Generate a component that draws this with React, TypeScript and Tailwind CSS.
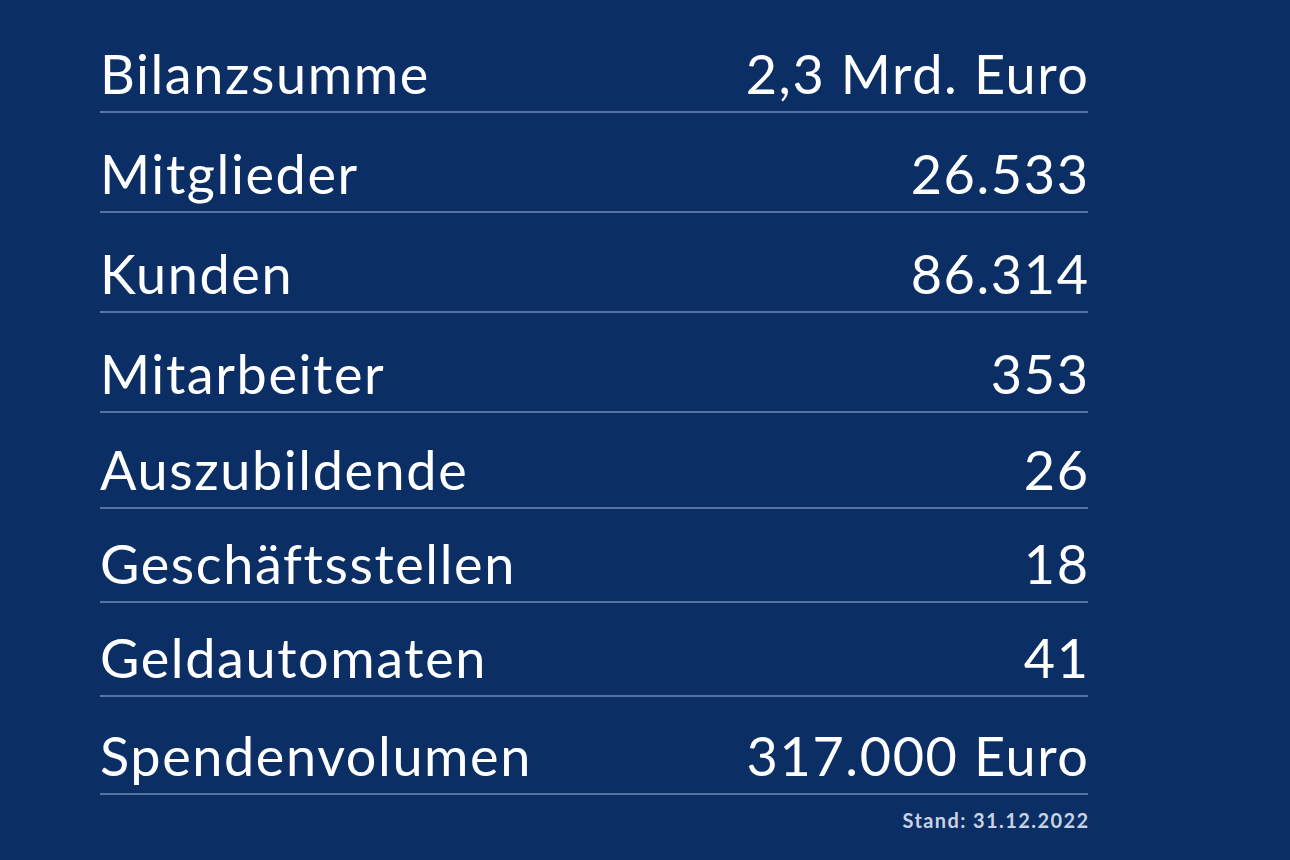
import React from 'react';

const rows = [
  { label: 'Bilanzsumme', value: '2,3 Mrd. Euro', h: 'h-[100px]' },
  { label: 'Mitglieder', value: '26.533', h: 'h-[100px]' },
  { label: 'Kunden', value: '86.314', h: 'h-[100px]' },
  { label: 'Mitarbeiter', value: '353', h: 'h-[100px]' },
  { label: 'Auszubildende', value: '26', h: 'h-[96px]' },
  { label: 'Geschäftsstellen', value: '18', h: 'h-[94px]' },
  { label: 'Geldautomaten', value: '41', h: 'h-[94px]' },
  { label: 'Spendenvolumen', value: '317.000 Euro', h: 'h-[98px]' },
];

export default function App() {
  return (
    <div className="w-[1290px] h-[860px] bg-[#0b2e65] overflow-hidden font-['Lato',sans-serif] text-white">
      <div className="ml-[100px] w-[988px] pt-[13px]">
        {rows.map((r) => (
          <div
            key={r.label}
            className={`${r.h} flex items-end justify-between border-b-2 border-[#5574a3] pb-[10px] text-[54px] leading-none tracking-[1.6px]`}
          >
            <span>{r.label}</span>
            <span className="-mr-[1.6px]">{r.value}</span>
          </div>
        ))}
        <div className="flex justify-end pt-[15px] text-[20px] font-bold text-[#c9d2e2] leading-none tracking-[1.4px]">
          <span className="-mr-[1.4px]">Stand: 31.12.2022</span>
        </div>
      </div>
    </div>
  );
}
